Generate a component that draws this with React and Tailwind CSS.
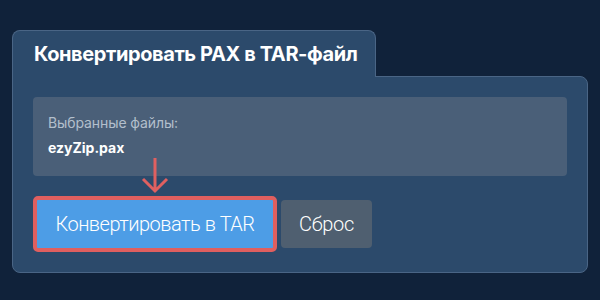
import React from "react";

export default function App() {
  return (
    <div className="w-[600px] h-[300px] bg-[#10223a] pt-[30px] px-[12px] overflow-hidden" style={{ fontFamily: "Inter, 'Noto Sans', sans-serif" }}>
      <div className="relative z-10 -mb-px w-[364px] h-[47px] rounded-t-[8px] border border-b-0 border-[#4a6585] bg-[#2c4a6b] flex items-center pl-[21px]">
        <span className="text-white font-bold text-[20px] tracking-[-0.4px]">Конвертировать PAX в TAR-файл</span>
      </div>
      <div className="relative h-[197px] rounded-b-[8px] rounded-tr-[8px] border border-[#4a6585] bg-[#2c4a6b] px-[20px] pt-[20px]">
        <div className="h-[79px] rounded-[4px] bg-[#4a5f78] px-[15px] pt-[17px]">
          <div className="text-[14px] leading-[18px] tracking-[-0.1px] text-[#b3bfcc]">Выбранные файлы:</div>
          <div className="mt-[6px] text-[14px] leading-[20px] font-bold text-white">ezyZip.pax</div>
        </div>
        <svg className="absolute left-[128px] top-[81px]" width="28" height="36" viewBox="0 0 28 36" fill="none">
          <path d="M14 0 V33 M2 21 L14 33 L26 21" stroke="#e06060" strokeWidth="3" />
        </svg>
        <div className="mt-[20px] flex items-center">
          <button className="h-[56px] w-[244px] rounded-[5px] border-4 border-[#e05f5f] bg-[#4d9de6] text-white text-[20px] font-light tracking-[-0.5px]" style={{ fontFamily: "Roboto, sans-serif" }}>
            Конвертировать в TAR
          </button>
          <button className="ml-[4px] h-[48px] w-[91px] rounded-[4px] bg-[#4f5f70] text-white text-[20px] font-light tracking-[-0.3px]" style={{ fontFamily: "Roboto, sans-serif" }}>
            Сброс
          </button>
        </div>
      </div>
    </div>
  );
}
